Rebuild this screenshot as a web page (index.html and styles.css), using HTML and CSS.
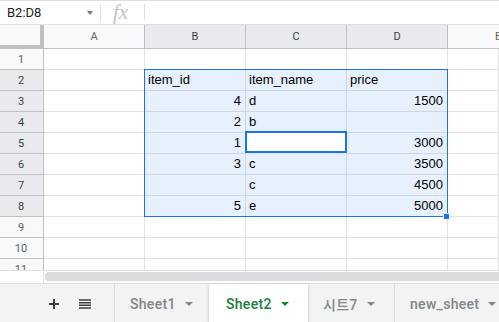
FILE: index.html
```html
<!DOCTYPE html>
<html lang="en">
<head>
    <meta charset="UTF-8">
    <title>Sheet2</title>
    <link rel="stylesheet" href="styles.css">
</head>
<body>
    <div class="formula-bar">
        <div class="name-box">
            <span>B2:D8</span>
            <span class="caret"></span>
        </div>
        <div class="fx">fx</div>
        <div class="formula-input"></div>
    </div>

    <div class="grid">
        <div class="row head">
            <div class="corner"></div>
            <div class="col-head">A</div>
            <div class="col-head on">B</div>
            <div class="col-head on">C</div>
            <div class="col-head on">D</div>
            <div class="col-head last">E</div>
        </div>
        <div class="row">
            <div class="row-head">1</div>
            <div class="cell"></div><div class="cell"></div><div class="cell"></div><div class="cell"></div><div class="cell last"></div>
        </div>
        <div class="row">
            <div class="row-head on">2</div>
            <div class="cell"></div>
            <div class="cell sel">item_id</div>
            <div class="cell sel">item_name</div>
            <div class="cell sel">price</div>
            <div class="cell last"></div>
        </div>
        <div class="row">
            <div class="row-head on">3</div>
            <div class="cell"></div>
            <div class="cell sel num">4</div>
            <div class="cell sel">d</div>
            <div class="cell sel num">1500</div>
            <div class="cell last"></div>
        </div>
        <div class="row">
            <div class="row-head on">4</div>
            <div class="cell"></div>
            <div class="cell sel num">2</div>
            <div class="cell sel">b</div>
            <div class="cell sel num"></div>
            <div class="cell last"></div>
        </div>
        <div class="row">
            <div class="row-head on">5</div>
            <div class="cell"></div>
            <div class="cell sel num">1</div>
            <div class="cell"></div>
            <div class="cell sel num">3000</div>
            <div class="cell last"></div>
        </div>
        <div class="row">
            <div class="row-head on">6</div>
            <div class="cell"></div>
            <div class="cell sel num">3</div>
            <div class="cell sel">c</div>
            <div class="cell sel num">3500</div>
            <div class="cell last"></div>
        </div>
        <div class="row">
            <div class="row-head on">7</div>
            <div class="cell"></div>
            <div class="cell sel num"></div>
            <div class="cell sel">c</div>
            <div class="cell sel num">4500</div>
            <div class="cell last"></div>
        </div>
        <div class="row">
            <div class="row-head on">8</div>
            <div class="cell"></div>
            <div class="cell sel num">5</div>
            <div class="cell sel">e</div>
            <div class="cell sel num">5000</div>
            <div class="cell last"></div>
        </div>
        <div class="row">
            <div class="row-head">9</div>
            <div class="cell"></div><div class="cell"></div><div class="cell"></div><div class="cell"></div><div class="cell last"></div>
        </div>
        <div class="row">
            <div class="row-head">10</div>
            <div class="cell"></div><div class="cell"></div><div class="cell"></div><div class="cell"></div><div class="cell last"></div>
        </div>
        <div class="row">
            <div class="row-head">11</div>
            <div class="cell"></div><div class="cell"></div><div class="cell"></div><div class="cell"></div><div class="cell last"></div>
        </div>

        <!-- selection B2:D8, active cell C5 -->
        <div class="selection"></div>
        <div class="active-cell"></div>
        <div class="fill-handle"></div>
    </div>

    <div class="hscroll">
        <div class="hscroll-corner"></div>
        <div class="hscroll-track"></div>
    </div>

    <div class="tabs">
        <div class="tab-tools">
            <svg width="12" height="12" viewBox="0 0 12 12">
                <path d="M6 1v10M1 6h10" stroke="#3c4043" stroke-width="2"/>
            </svg>
            <svg width="12" height="10" viewBox="0 0 12 10">
                <path d="M0 1h12M0 3.7h12M0 6.3h12M0 9h12" stroke="#3c4043" stroke-width="1.6"/>
            </svg>
        </div>
        <div class="tab first">Sheet1<span class="arrow"></span></div>
        <div class="tab active">Sheet2<span class="arrow"></span></div>
        <div class="tab third">시트7<span class="arrow"></span></div>
        <div class="tab">new_sheet<span class="arrow"></span></div>
    </div>
</body>
</html>
```

FILE: styles.css
```css
* {
    margin: 0;
    padding: 0;
    box-sizing: border-box;
}

body {
    width: 499px;
    height: 322px;
    overflow: hidden;
    background-color: #ffffff;
    font-family: 'Liberation Sans', Arial, sans-serif;
    color: #000000;
}

/* formula bar */

.formula-bar {
    display: flex;
    height: 25px;
    border-top: 1px solid #e0e0e0;
    border-bottom: 1px solid #e0e0e0;
}

.name-box {
    width: 101px;
    display: flex;
    align-items: center;
    justify-content: space-between;
    padding: 0 8px 0 7px;
    font-family: Roboto, 'Liberation Sans', sans-serif;
    font-size: 13px;
    color: #202124;
    position: relative;
}

.name-box::after,
.fx::after {
    content: '';
    position: absolute;
    right: 0;
    top: 3px;
    bottom: 3px;
    width: 1px;
    background-color: #e0e0e0;
}

.caret {
    width: 0;
    height: 0;
    border-left: 3.5px solid transparent;
    border-right: 3.5px solid transparent;
    border-top: 4px solid #70757a;
}

.fx {
    width: 44px;
    position: relative;
    padding-left: 12px;
    font-family: 'Liberation Serif', serif;
    font-style: italic;
    font-size: 21px;
    line-height: 22px;
    color: #c4c4c4;
}

.formula-input {
    flex: 1;
}

/* grid */

.grid {
    position: relative;
    height: 245px;
    overflow: hidden;
    font-size: 13px;
}

.row {
    display: flex;
    height: 21px;
}

.row.head {
    height: 24px;
}

.corner {
    width: 44px;
    flex: 0 0 44px;
    background-color: #f8f9fa;
    border-right: 4px solid #c0c0c0;
    border-bottom: 4px solid #c0c0c0;
}

.col-head {
    flex: 0 0 101px;
    background-color: #f8f9fa;
    border-right: 1px solid #c0c0c0;
    border-bottom: 1px solid #c0c0c0;
    font-family: Roboto, 'Liberation Sans', sans-serif;
    font-size: 11px;
    color: #5f6368;
    display: flex;
    align-items: center;
    justify-content: center;
}

.col-head.on {
    background-color: #e8eaed;
    color: #3c4043;
}

.col-head.last {
    flex: 1;
    justify-content: flex-start;
    padding-left: 47px;
}

.row-head {
    flex: 0 0 44px;
    background-color: #f8f9fa;
    border-right: 1px solid #c0c0c0;
    border-bottom: 1px solid #c0c0c0;
    font-family: Roboto, 'Liberation Sans', sans-serif;
    font-size: 11px;
    color: #5f6368;
    display: flex;
    align-items: center;
    justify-content: center;
    padding-right: 1px;
}

.row-head.on {
    background-color: #e8eaed;
    color: #3c4043;
}

.cell {
    flex: 0 0 101px;
    border-right: 1px solid #e2e3e3;
    border-bottom: 1px solid #e2e3e3;
    padding: 0 3px;
    line-height: 20px;
    white-space: nowrap;
    overflow: hidden;
}

.cell.last {
    flex: 1;
}

.cell.sel {
    background-color: #e7f0fd;
    border-color: #cdd6e2;
}

.cell.num {
    text-align: right;
    padding-right: 4px;
}

.selection {
    position: absolute;
    left: 144px;
    top: 44px;
    width: 304px;
    height: 148px;
    border: 1px solid #1a73e8;
}

.active-cell {
    position: absolute;
    left: 245px;
    top: 106px;
    width: 102px;
    height: 22px;
    border: 2px solid #1a73e8;
}

.fill-handle {
    position: absolute;
    left: 443px;
    top: 188px;
    width: 7px;
    height: 7px;
    background-color: #1a73e8;
    border: 1px solid #ffffff;
}

/* horizontal scrollbar */

.hscroll {
    display: flex;
    height: 13px;
    border-top: 1px solid #e0e0e0;
}

.hscroll-corner {
    width: 44px;
    border-right: 1px solid #e0e0e0;
}

.hscroll-track {
    flex: 1;
    margin: 1px 0 2px 1px;
    background-color: #dadce0;
    border-radius: 4px 0 0 4px;
}

/* sheet tabs */

.tabs {
    display: flex;
    height: 40px;
    background-color: #f1f3f4;
    border-top: 1px solid #e0e0e0;
    font-family: Roboto, 'Noto Sans CJK KR', sans-serif;
    font-size: 14px;
    font-weight: 500;
    letter-spacing: 0.3px;
    color: #80868b;
}

.tab-tools {
    flex: 0 0 114px;
    display: flex;
    align-items: center;
    gap: 19px;
    padding-left: 48px;
}

.tab {
    flex-shrink: 0;
    display: flex;
    align-items: center;
    gap: 9px;
    padding: 0 15px;
    border-left: 1px solid #dadce0;
    white-space: nowrap;
}

.tab.first {
    width: 95px;
}

.tab.active {
    width: 99px;
    padding-left: 17px;
    background-color: #ffffff;
    color: #188038;
    border-left: none;
    box-shadow: 0 1px 3px rgba(60, 64, 67, 0.3);
}

.tab.third {
    width: 86px;
    border-left: none;
}

.arrow {
    flex-shrink: 0;
    width: 0;
    height: 0;
    border-left: 4px solid transparent;
    border-right: 4px solid transparent;
    border-top: 4px solid #80868b;
}

.tab.active .arrow {
    border-top-color: #188038;
}
```
